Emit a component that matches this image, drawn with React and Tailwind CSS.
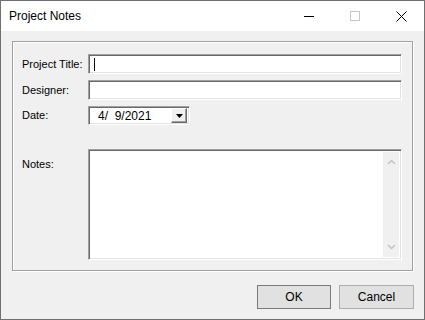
import React from 'react';

const sunken =
  'border border-t-[#a0a0a0] border-l-[#a0a0a0] border-b-white border-r-white shadow-[inset_1px_1px_0_#696969,inset_-1px_-1px_0_#e3e3e3] bg-white';

const CaptionButton = ({ children }) => (
  <div className="w-[46px] h-full flex items-center justify-center">{children}</div>
);

const Label = ({ children, className = '' }) => (
  <div className={`text-[11px] text-black ${className}`}>{children}</div>
);

const App = () => (
  <div
    className="w-[425px] h-[320px] border border-[#707070] bg-[#f0f0f0] flex flex-col"
    style={{ fontFamily: '"Liberation Sans", Arial, sans-serif' }}
  >
    {/* title bar */}
    <div className="h-[30px] bg-white flex items-center justify-between">
      <div className="pl-[8px] text-[12px] text-black">Project Notes</div>
      <div className="flex h-full">
        <CaptionButton>
          <svg width="10" height="10" viewBox="0 0 10 10">
            <path d="M0 5.5h10" stroke="#000" strokeWidth="1" />
          </svg>
        </CaptionButton>
        <CaptionButton>
          <svg width="10" height="10" viewBox="0 0 10 10">
            <rect x="0.5" y="0.5" width="9" height="9" fill="none" stroke="#c6c6c6" strokeWidth="1" />
          </svg>
        </CaptionButton>
        <CaptionButton>
          <svg width="11" height="11" viewBox="0 0 11 11">
            <path d="M0.5 0.5l10 10M10.5 0.5l-10 10" stroke="#000" strokeWidth="1" />
          </svg>
        </CaptionButton>
      </div>
    </div>

    {/* body */}
    <div className="flex-1 flex flex-col px-[11px] pt-[10px]">
      <div className="border border-[#a0a0a0] shadow-[inset_1px_1px_0_white,1px_1px_0_white] pl-[9px] pr-[10px] pt-[12px] pb-[10px] grid grid-cols-[66px_314px] gap-y-[6px]">
        <Label className="self-center">Project Title:</Label>
        <div className={`${sunken} h-[20px] relative`}>
          <div className="absolute left-[5px] top-[3px] w-[1px] h-[13px] bg-black" />
        </div>

        <Label className="self-center">Designer:</Label>
        <div className={`${sunken} h-[20px]`} />

        <Label className="self-center">Date:</Label>
        <div className={`${sunken} h-[19px] w-[102px] flex items-center justify-between pr-[2px]`}>
          <span className="pl-[9px] text-[12px] text-black whitespace-pre">4/  9/2021</span>
          <div className="w-[16px] h-[15px] bg-[#f0f0f0] border border-t-white border-l-white border-b-[#696969] border-r-[#696969] shadow-[inset_-1px_-1px_0_#a0a0a0] flex items-center justify-center">
            <svg width="7" height="4" viewBox="0 0 7 4">
              <path d="M0 0h7L3.5 4z" fill="#000" />
            </svg>
          </div>
        </div>

        <Label className="mt-[25px]">Notes:</Label>
        <div className={`${sunken} h-[111px] mt-[18px] flex justify-end p-[2px]`}>
          <div className="w-[16px] h-full bg-[#f0f0f0] flex flex-col items-center justify-between py-[7px]">
            <svg width="9" height="6" viewBox="0 0 9 6">
              <path d="M1 5l3.5-3.5L8 5" fill="none" stroke="#c2c2c2" strokeWidth="1.5" />
            </svg>
            <svg width="9" height="6" viewBox="0 0 9 6">
              <path d="M1 1l3.5 3.5L8 1" fill="none" stroke="#c2c2c2" strokeWidth="1.5" />
            </svg>
          </div>
        </div>
      </div>

      <div className="flex justify-end gap-[8px] mt-[14px] -mr-[1px]">
        <button className="w-[74px] h-[24px] bg-[#e1e1e1] border border-[#7a7a7a] text-[12px] text-black">
          OK
        </button>
        <button className="w-[75px] h-[24px] bg-[#e1e1e1] border border-[#adadad] text-[12px] text-black">
          Cancel
        </button>
      </div>
    </div>
  </div>
);

export default App;
